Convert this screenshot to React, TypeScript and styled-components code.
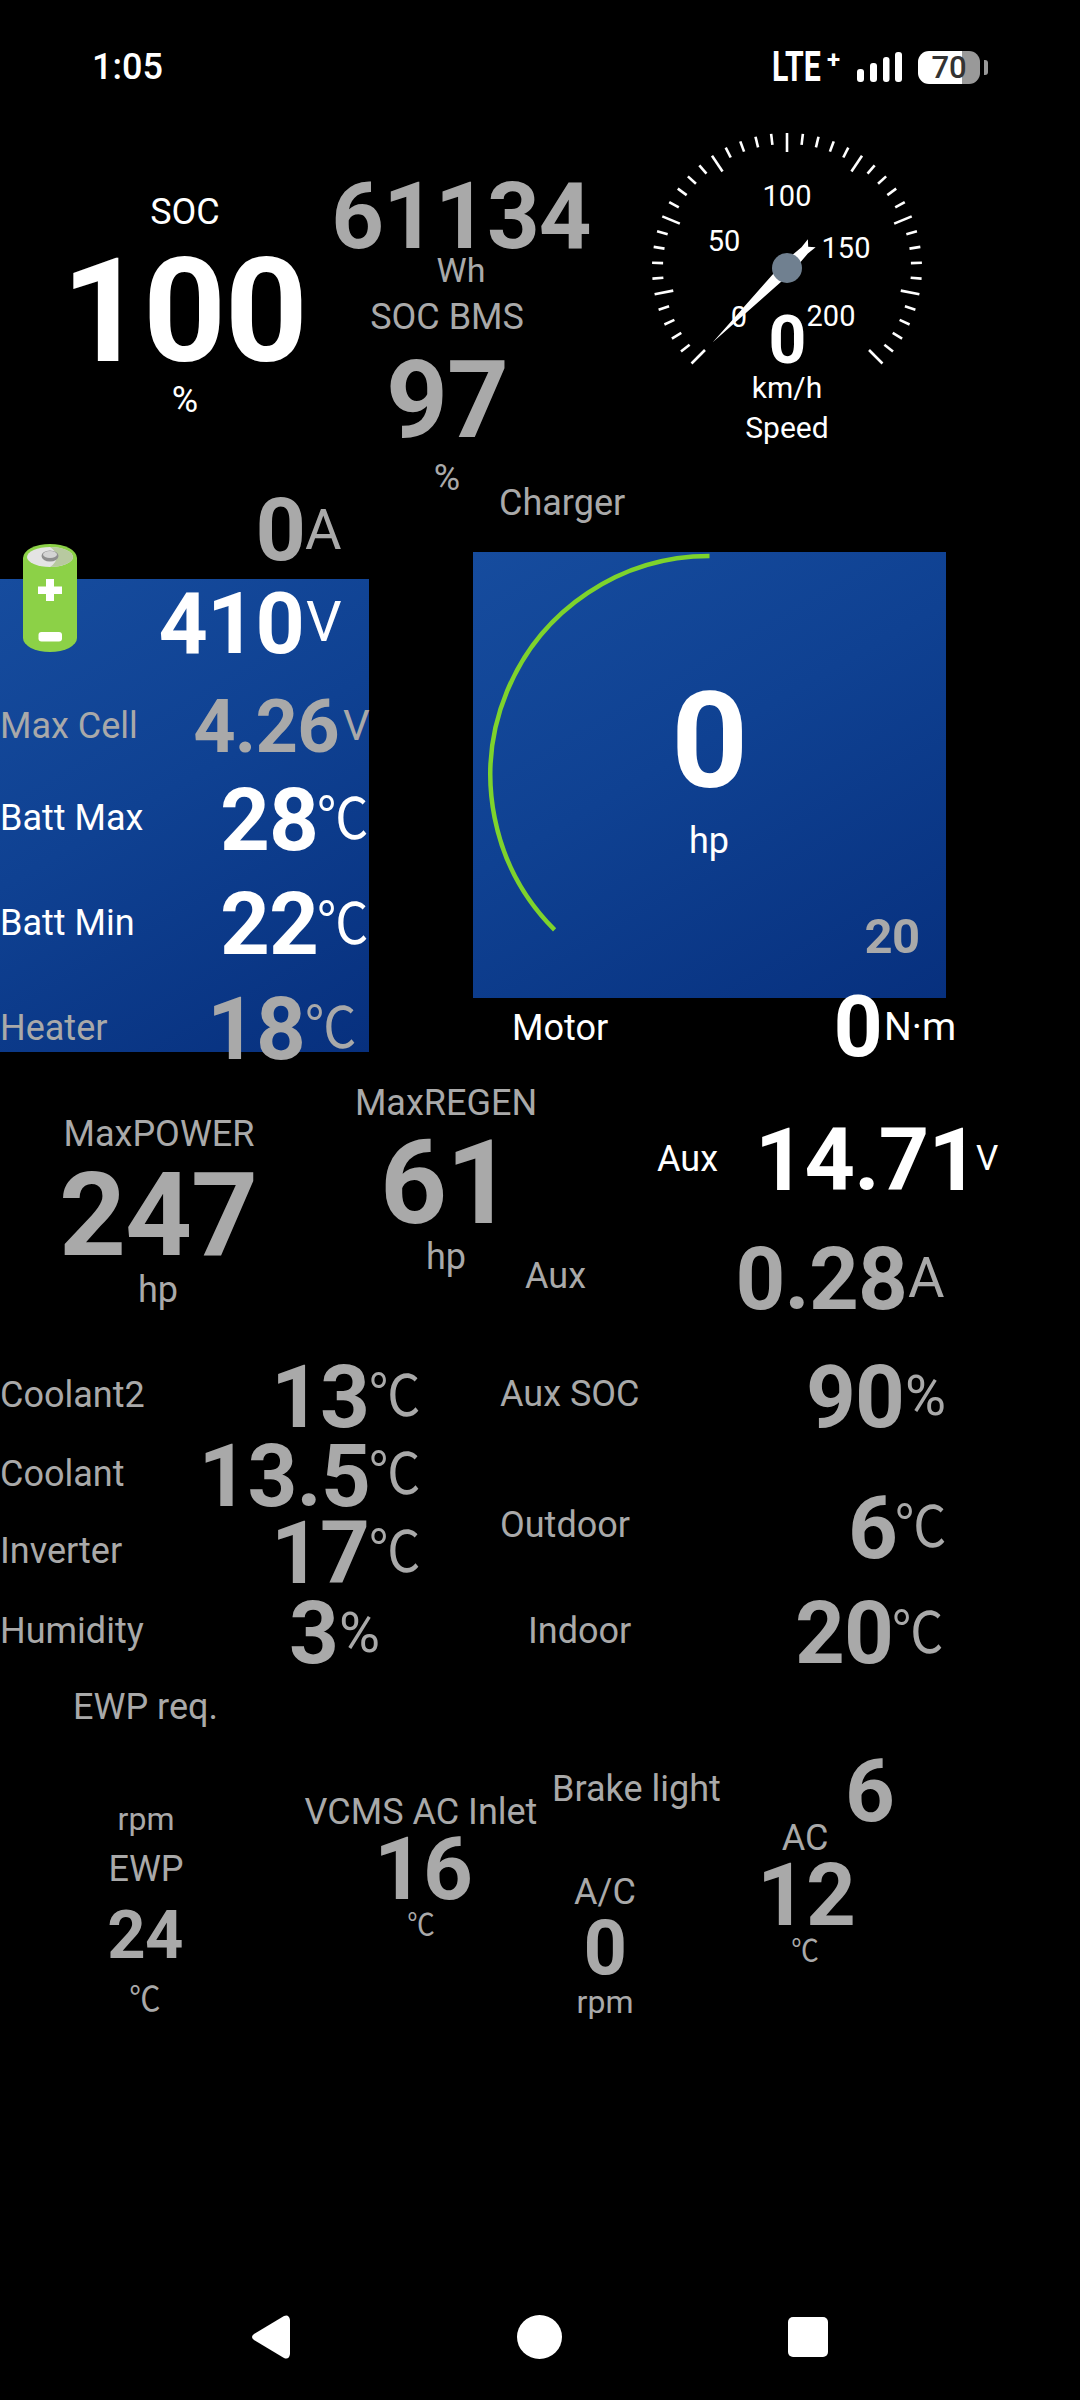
import React from 'react'
import styled, { createGlobalStyle } from 'styled-components'

type Tone = 'white' | 'gray'
type Anchor = 'start' | 'middle' | 'end'

interface PlacedProps {
  $x: number
  $y: number
  $size?: number
  $tone?: Tone
  $anchor?: Anchor
  $squeeze?: boolean
}

const STATUS_HEIGHT = 100
const tones: Record<Tone, string> = { white: '#ffffff', gray: '#a9a9a9' }
const shifts: Record<Anchor, string> = { start: '0', middle: '-50%', end: '-100%' }
const origins: Record<Anchor, string> = { start: 'left', middle: 'center', end: 'right' }

const GlobalStyle = createGlobalStyle`
  html, body {
    margin: 0;
    padding: 0;
    background: #000;
  }
`

const Screen = styled.div`
  display: flex;
  flex-direction: column;
  width: 1080px;
  height: 2400px;
  overflow: hidden;
  background: #000;
  color: #fff;
  font-family: Roboto, 'Noto Sans CJK SC', sans-serif;
`

const StatusBar = styled.div`
  display: flex;
  align-items: flex-start;
  justify-content: space-between;
  height: ${STATUS_HEIGHT}px;
  padding: 50px 92px 0 92px;
  box-sizing: border-box;
`

const Clock = styled.span`
  font-size: 36px;
  font-weight: 500;
  line-height: 34px;
`

const StatusIcons = styled.div`
  display: flex;
  align-items: center;
  height: 34px;
`

const Network = styled.span`
  display: inline-block;
  width: 50px;
  font-size: 42px;
  font-weight: 700;
  line-height: 34px;
  transform: scaleX(0.72);
  transform-origin: left center;
`

const NetworkPlus = styled.span`
  width: 14px;
  margin: -14px 16px 0 5px;
  font-size: 24px;
  font-weight: 700;
  line-height: 20px;
`

const BatteryPill = styled.div`
  display: flex;
  align-items: center;
  justify-content: center;
  width: 62px;
  height: 33px;
  margin-left: 16px;
  border-radius: 11px;
  background: linear-gradient(to right, #fff 71%, #999 71%);
  color: #333;
  font-size: 31px;
  font-weight: 500;
`

const BatteryNub = styled.div`
  width: 4px;
  height: 15px;
  margin-left: 4px;
  border-radius: 0 3px 3px 0;
  background: #999;
`

const Canvas = styled.div`
  position: relative;
  flex: 1;
`

const Placed = styled.span<PlacedProps>`
  position: absolute;
  left: ${p => p.$x}px;
  top: ${p => p.$y - STATUS_HEIGHT - 0.841 * (p.$size ?? 36)}px;
  font-size: ${p => p.$size ?? 36}px;
  line-height: 1;
  white-space: nowrap;
  color: ${p => tones[p.$tone ?? 'gray']};
  transform: translateX(${p => shifts[p.$anchor ?? 'start']}) ${p => (p.$squeeze ? 'scaleX(0.92)' : '')};
  transform-origin: ${p => origins[p.$anchor ?? 'start']} center;
`

const Label = styled(Placed)`
  font-weight: 400;
`

const Value = styled(Placed)`
  font-weight: 700;
  letter-spacing: -0.01em;
`

const Panel = styled.div<{ $x: number; $y: number; $w: number; $h: number }>`
  position: absolute;
  left: ${p => p.$x}px;
  top: ${p => p.$y - STATUS_HEIGHT}px;
  width: ${p => p.$w}px;
  height: ${p => p.$h}px;
  background: linear-gradient(150deg, #164c9e 0%, #0f4192 45%, #07307e 100%);
`

const Drawing = styled.svg<{ $x: number; $y: number }>`
  position: absolute;
  left: ${p => p.$x}px;
  top: ${p => p.$y}px;
  overflow: visible;
`

const NavBar = styled.div`
  display: grid;
  grid-template-columns: repeat(3, 268.5px);
  justify-content: center;
  justify-items: center;
  align-items: center;
  height: 126px;
  padding-right: 2px;
`

const NavCircle = styled.div`
  width: 45px;
  height: 44px;
  border-radius: 50%;
  background: #fff;
`

const NavSquare = styled.div`
  width: 40px;
  height: 40px;
  border-radius: 5px;
  background: #fff;
`

const SignalBars = () => (
  <svg width="45" height="30" viewBox="0 0 45 30">
    <rect x="0" y="17" width="7" height="13" rx="3" fill="#fff" />
    <rect x="13" y="11" width="7" height="19" rx="3" fill="#fff" />
    <rect x="26" y="5" width="6.5" height="25" rx="3" fill="#fff" />
    <rect x="38" y="0" width="7" height="30" rx="3" fill="#fff" />
  </svg>
)

const BatteryIcon = () => (
  <Drawing $x={23} $y={444} width="54" height="108" viewBox="0 0 54 108">
    <path d="M0 14 A27 14 0 0 1 54 14 V94 A27 14 0 0 1 0 94 Z" fill="#8cd147" />
    <ellipse cx="27" cy="13" rx="23" ry="10" fill="#e4e4e4" />
    <path d="M27 3 A23 10 0 0 1 27 23 A30 16 0 0 0 27 3 Z" fill="#b8c9a0" />
    <ellipse cx="27" cy="12" rx="8.5" ry="5.5" fill="#8f8f8f" />
    <ellipse cx="27" cy="10.5" rx="7" ry="3.5" fill="#d4d4d4" />
    <path d="M23 35 H31 V42.5 H39 V50 H31 V57 H23 V50 H15 V42.5 H23 Z" fill="#fff" />
    <rect x="15.5" y="88" width="23.5" height="9.5" rx="3" fill="#fff" />
  </Drawing>
)

const TICKS = 40
const speedTicks = Array.from({ length: TICKS + 1 }, (_, i) => ({
  angle: -135 + i * 6.75,
  major: i % 5 === 0
}))

const Speedometer = () => (
  <Drawing $x={647} $y={28} width="280" height="280" viewBox="-140 -140 280 280">
    {speedTicks.map(t => (
      <line
        key={t.angle}
        x1="0"
        y1="-135"
        x2="0"
        y2={t.major ? -116 : -124}
        stroke="#fff"
        strokeWidth="2.6"
        transform={`rotate(${t.angle})`}
      />
    ))}
    <polygon
      points="0,-105 6.5,0 4.5,25 5.5,35 0,30 -5.5,35 -4.5,25 -6.5,0"
      fill="#fff"
      transform="rotate(-135)"
    />
    <circle cx="0" cy="0" r="15" fill="#708090" />
  </Drawing>
)

const PowerArc = () => (
  <Drawing $x={0} $y={0} width="473" height="446" viewBox="0 0 473 446">
    <path d="M81.6 377.9 A219 219 0 0 1 236.5 4" fill="none" stroke="#7ed32c" strokeWidth="4.5" />
  </Drawing>
)

const speedLabels: [string, number, number][] = [
  ['100', 787, 206],
  ['50', 724, 251],
  ['150', 846, 258],
  ['200', 831, 326],
  ['0', 739, 327]
]

const labels: { t: string; x: number; y: number; size?: number; tone?: Tone; anchor?: Anchor }[] = [
  { t: 'SOC', x: 185, y: 224, tone: 'white', anchor: 'middle' },
  { t: '%', x: 185, y: 412, tone: 'white', anchor: 'middle' },
  { t: 'Wh', x: 461, y: 282, anchor: 'middle', size: 34 },
  { t: 'SOC BMS', x: 447, y: 329, anchor: 'middle' },
  { t: '%', x: 447, y: 490, anchor: 'middle' },
  { t: 'km/h', x: 787, y: 398, size: 30, tone: 'white', anchor: 'middle' },
  { t: 'Speed', x: 787, y: 438, size: 30, tone: 'white', anchor: 'middle' },
  { t: 'Charger', x: 499, y: 515 },
  { t: 'A', x: 305, y: 549, size: 56 },
  { t: 'V', x: 306, y: 641, size: 56, tone: 'white' },
  { t: 'Max Cell', x: 0, y: 738 },
  { t: 'V', x: 343, y: 740, size: 42 },
  { t: 'Batt Max', x: 0, y: 830, tone: 'white' },
  { t: '℃', x: 317, y: 838, size: 56, tone: 'white' },
  { t: 'Batt Min', x: 0, y: 935, tone: 'white' },
  { t: '℃', x: 317, y: 943, size: 56, tone: 'white' },
  { t: 'Heater', x: 0, y: 1040 },
  { t: '℃', x: 305, y: 1047, size: 56 },
  { t: 'hp', x: 709, y: 853, tone: 'white', anchor: 'middle' },
  { t: 'Motor', x: 512, y: 1040, tone: 'white' },
  { t: 'N·m', x: 884, y: 1041, size: 39, tone: 'white' },
  { t: 'MaxPOWER', x: 159, y: 1146, anchor: 'middle' },
  { t: 'hp', x: 158, y: 1302, anchor: 'middle' },
  { t: 'MaxREGEN', x: 446, y: 1115, anchor: 'middle' },
  { t: 'hp', x: 446, y: 1269, anchor: 'middle' },
  { t: 'Aux', x: 657, y: 1171, tone: 'white' },
  { t: 'V', x: 976, y: 1170, size: 35, tone: 'white' },
  { t: 'Aux', x: 525, y: 1288 },
  { t: 'A', x: 908, y: 1297, size: 56 },
  { t: 'Coolant2', x: 0, y: 1407 },
  { t: '℃', x: 369, y: 1415, size: 56 },
  { t: 'Aux SOC', x: 500, y: 1406 },
  { t: '%', x: 905, y: 1415, size: 56 },
  { t: 'Coolant', x: 0, y: 1486 },
  { t: '℃', x: 369, y: 1493, size: 56 },
  { t: 'Inverter', x: 0, y: 1563 },
  { t: '℃', x: 369, y: 1571, size: 56 },
  { t: 'Outdoor', x: 500, y: 1537 },
  { t: '℃', x: 895, y: 1546, size: 56 },
  { t: 'Humidity', x: 0, y: 1643 },
  { t: '%', x: 339, y: 1652, size: 56 },
  { t: 'Indoor', x: 528, y: 1643 },
  { t: '℃', x: 892, y: 1652, size: 56 },
  { t: 'EWP req.', x: 73, y: 1719 },
  { t: 'Brake light', x: 552, y: 1801 },
  { t: 'rpm', x: 146, y: 1830, size: 32, anchor: 'middle' },
  { t: 'VCMS AC Inlet', x: 421, y: 1824, anchor: 'middle' },
  { t: 'AC', x: 805, y: 1850, anchor: 'middle' },
  { t: 'EWP', x: 146, y: 1881, anchor: 'middle' },
  { t: 'A/C', x: 605, y: 1904, anchor: 'middle' },
  { t: '℃', x: 421, y: 1935, size: 30, anchor: 'middle' },
  { t: '℃', x: 805, y: 1961, size: 30, anchor: 'middle' },
  { t: '℃', x: 145, y: 2011, size: 34, anchor: 'middle' },
  { t: 'rpm', x: 605, y: 2013, size: 32, anchor: 'middle' }
]

const values: { t: string; x: number; y: number; size: number; tone?: Tone; anchor?: Anchor }[] = [
  { t: '100', x: 184, y: 361, size: 145, tone: 'white', anchor: 'middle' },
  { t: '61134', x: 461, y: 248, size: 92, anchor: 'middle' },
  { t: '97', x: 447, y: 437, size: 108, anchor: 'middle' },
  { t: '0', x: 787, y: 364, size: 66, tone: 'white', anchor: 'middle' },
  { t: '0', x: 305, y: 560, size: 88, anchor: 'end' },
  { t: '410', x: 304, y: 653, size: 86, tone: 'white', anchor: 'end' },
  { t: '4.26', x: 339, y: 752, size: 74, anchor: 'end' },
  { t: '28', x: 318, y: 850, size: 87, tone: 'white', anchor: 'end' },
  { t: '22', x: 318, y: 954, size: 87, tone: 'white', anchor: 'end' },
  { t: '18', x: 305, y: 1059, size: 87, anchor: 'end' },
  { t: '0', x: 709, y: 788, size: 134, tone: 'white', anchor: 'middle' },
  { t: '20', x: 892, y: 953, size: 49, anchor: 'middle' },
  { t: '0', x: 882, y: 1056, size: 86, tone: 'white', anchor: 'end' },
  { t: '247', x: 158, y: 1255, size: 117, anchor: 'middle' },
  { t: '61', x: 446, y: 1223, size: 117, anchor: 'middle' },
  { t: '14.71', x: 978, y: 1190, size: 88, tone: 'white', anchor: 'end' },
  { t: '0.28', x: 907, y: 1309, size: 87, anchor: 'end' },
  { t: '13', x: 369, y: 1427, size: 87, anchor: 'end' },
  { t: '90', x: 904, y: 1427, size: 87, anchor: 'end' },
  { t: '13.5', x: 370, y: 1506, size: 87, anchor: 'end' },
  { t: '17', x: 369, y: 1583, size: 87, anchor: 'end' },
  { t: '6', x: 897, y: 1558, size: 87, anchor: 'end' },
  { t: '3', x: 338, y: 1663, size: 87, anchor: 'end' },
  { t: '20', x: 893, y: 1663, size: 87, anchor: 'end' },
  { t: '6', x: 894, y: 1821, size: 87, anchor: 'end' },
  { t: '16', x: 423, y: 1899, size: 87, anchor: 'middle' },
  { t: '12', x: 806, y: 1925, size: 87, anchor: 'middle' },
  { t: '24', x: 145, y: 1958, size: 67, anchor: 'middle' },
  { t: '0', x: 605, y: 1974, size: 76, anchor: 'middle' }
]

export default function App() {
  return (
    <Screen>
      <GlobalStyle />
      <StatusBar>
        <Clock>1:05</Clock>
        <StatusIcons>
          <Network>LTE</Network>
          <NetworkPlus>+</NetworkPlus>
          <SignalBars />
          <BatteryPill>70</BatteryPill>
          <BatteryNub />
        </StatusIcons>
      </StatusBar>

      <Canvas>
        <Panel $x={0} $y={579} $w={369} $h={473} />
        <Panel $x={473} $y={552} $w={473} $h={446}>
          <PowerArc />
        </Panel>
        <BatteryIcon />
        <Speedometer />

        {speedLabels.map(([t, x, y]) => (
          <Label key={t} $x={x} $y={y} $size={29} $tone="white" $anchor="middle">
            {t}
          </Label>
        ))}
        {labels.map(l => (
          <Label
            key={`${l.t}-${l.x}-${l.y}`}
            $x={l.x}
            $y={l.y}
            $size={l.size}
            $tone={l.tone}
            $anchor={l.anchor}
            $squeeze={l.t === '℃'}
          >
            {l.t}
          </Label>
        ))}
        {values.map(v => (
          <Value key={`${v.t}-${v.x}-${v.y}`} $x={v.x} $y={v.y} $size={v.size} $tone={v.tone} $anchor={v.anchor}>
            {v.t}
          </Value>
        ))}
      </Canvas>

      <NavBar>
        <svg width="40" height="44" viewBox="0 0 40 44">
          <path d="M3 19 L33 1 Q38 -1 39 5 V39 Q38 45 33 43 L3 25 Q-1 22 3 19 Z" fill="#fff" />
        </svg>
        <NavCircle />
        <NavSquare />
      </NavBar>
    </Screen>
  )
}
